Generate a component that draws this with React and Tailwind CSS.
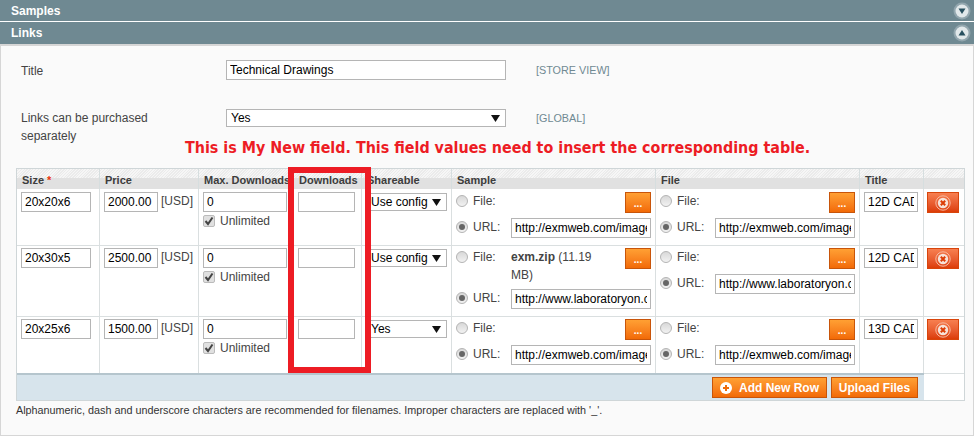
const rows = [
    { size: "20x20x6", price: "2000.00", share: "Use config", sample: "http://exmweb.com/images/sample.zip", file: "http://exmweb.com/images/file.zip", title: "12D CAD Drawing" },
    { size: "20x30x5", price: "2500.00", share: "Use config", sampleFile: true, sample: "http://www.laboratoryon.com/sample.zip", file: "http://www.laboratoryon.com/file.zip", title: "12D CAD Drawing" },
    { size: "20x25x6", price: "1500.00", share: "Yes", sample: "http://exmweb.com/images/sample.zip", file: "http://exmweb.com/images/file.zip", title: "13D CAD Drawing" },
];

const inputCls = "h-5 border border-[#b5b5b5] bg-white px-[3px] text-[12px] text-black outline-none";
const orangeCls = "bg-gradient-to-b from-[#ffa033] to-[#f26a05] border border-[#c8550a]";
const thCls = "h-[20px] border-r border-[#d6dedf] px-[5px] text-left align-top pt-[4px] font-bold text-[11px] leading-[15px] whitespace-nowrap text-[#3d3d3d] bg-[linear-gradient(to_bottom,transparent_9px,#e1e1e1_9px),repeating-linear-gradient(135deg,#f6f6f6_0,#f6f6f6_1px,#ebebeb_1px,#ebebeb_2px)]";
const tdCls = "border-r border-[#dadfe0] p-0 align-top";

const TextBox = ({ value, className }) => (
    <input readOnly value={value} className={`${inputCls} ${className}`} />
);

const Caret = () => (
    <svg width="9" height="7" viewBox="0 0 9 7" className="shrink-0">
        <path d="M0 0h9L4.5 7z" fill="#111" />
    </svg>
);

const Select = ({ value, className }) => (
    <div className={`flex items-center justify-between border border-[#b5b5b5] bg-white text-[12px] text-black ${className}`}>
        <span>{value}</span>
        <Caret />
    </div>
);

const Radio = ({ checked }) => (
    <span className="flex h-3 w-3 shrink-0 items-center justify-center rounded-full border border-[#b4b4b4] bg-gradient-to-b from-[#d8d8d8] to-[#f2f2f2]">
        {checked && <span className="h-[6px] w-[6px] rounded-full bg-[#666]" />}
    </span>
);

const Browse = () => (
    <div className={`flex h-[21px] w-[26px] shrink-0 items-end justify-center pb-[3px] text-[10px] font-bold leading-[10px] text-white ${orangeCls}`}>...</div>
);

const CircleButton = ({ kind }) => (
    <svg width="18" height="18" viewBox="0 0 18 18">
        <circle cx="9" cy="9" r="8.5" fill="#92a6ae" />
        <circle cx="9" cy="9" r="6.5" fill="#e1e8ea" />
        <path d={kind === "down" ? "M5.5 6.5h7L9 12z" : "M5.5 11.5h7L9 6z"} fill="#28505f" />
    </svg>
);

const Section = ({ title, kind, className }) => (
    <div className={`flex items-center justify-between bg-[#6f8992] pl-[11px] pr-[3px] text-[12px] font-bold text-white ${className}`}>
        <span>{title}</span>
        <CircleButton kind={kind} />
    </div>
);

const FileCell = ({ url, showName, first }) => (
    <div className={`flex flex-col pl-[4px] ${first ? "pt-[3px]" : "pt-[2px]"}`}>
        <div className="flex items-start">
            <div className="flex w-[55px] shrink-0 items-center gap-[5px] pt-px leading-[16px]">
                <Radio />
                <span>File:</span>
            </div>
            {showName ? (
                <div className="mr-[22px] h-[36px] w-[92px] leading-[18px]">
                    <span className="font-bold">exm.zip</span> (11.19 MB)
                </div>
            ) : (
                <div className="w-[114px]" />
            )}
            <Browse />
        </div>
        <div className="mt-[5px] flex items-start">
            <div className="flex w-[55px] shrink-0 items-center gap-[5px] pt-px leading-[16px]">
                <Radio checked />
                <span>URL:</span>
            </div>
            <TextBox value={url} className="w-[140px]" />
        </div>
    </div>
);

const App = () => {
    return (
        <div className="h-[436px] w-[974px] overflow-hidden bg-white font-['Liberation_Sans',Arial,sans-serif] text-[12px] text-[#444]">
            <Section title="Samples" kind="down" className="h-[21px]" />
            <Section title="Links" kind="up" className="mt-px h-[22px]" />
            <div className="h-[392px] border-x border-b border-t-2 border-[#d6d6d6] bg-[#fafafa] px-[15px]">
                <div className="flex h-[49px] items-start pt-[14px]">
                    <div className="w-[210px] pl-[5px] pt-[2px]">Title</div>
                    <TextBox value="Technical Drawings" className="w-[280px]" />
                    <div className="ml-[30px] pt-[2px] text-[10.8px] text-[#6f8992]">[STORE VIEW]</div>
                </div>
                <div className="flex h-[73px] items-start pt-[14px]">
                    <div className="w-[210px] pl-[5px] leading-[18px]">Links can be purchased<br />separately</div>
                    <Select value="Yes" className="h-[18px] w-[280px] pl-[4px] pr-[5px]" />
                    <div className="ml-[30px] pt-px text-[10.8px] text-[#6f8992]">[GLOBAL]</div>
                </div>
                <div className="relative">
                    <p className="absolute left-[169px] top-[-32px] whitespace-nowrap font-['DejaVu_Sans_Condensed','DejaVu_Sans',sans-serif] text-[15.9px] font-bold text-[#ed1c24] [font-stretch:condensed]">
                        This is My New field. This field values need to insert the corresponding table.
                    </p>
                    <div className="absolute left-[272px] top-[-1px] h-[206px] w-[83px] border-[6px] border-[#ed1c24]" />
                    <table className="w-[949px] table-fixed border-separate border-spacing-0 border border-[#cfd6d8] bg-white">
                        <colgroup>
                            <col className="w-[83px]" />
                            <col className="w-[99px]" />
                            <col className="w-[95px]" />
                            <col className="w-[68px]" />
                            <col className="w-[90px]" />
                            <col className="w-[204px]" />
                            <col className="w-[204px]" />
                            <col className="w-[64px]" />
                            <col className="w-[40px]" />
                        </colgroup>
                        <thead>
                            <tr>
                                <th className={thCls}>Size <span className="text-[#eb340a]">*</span></th>
                                <th className={thCls}>Price</th>
                                <th className={thCls}>Max. Downloads</th>
                                <th className={thCls}>Downloads</th>
                                <th className={thCls}>Shareable</th>
                                <th className={thCls}>Sample</th>
                                <th className={thCls}>File</th>
                                <th className={thCls}>Title</th>
                                <th className={`${thCls} border-r-0`} />
                            </tr>
                        </thead>
                        <tbody>
                            {rows.map((row, i) => {
                                const first = i === 0;
                                const topLine = first ? "" : "border-t border-t-[#dadfe0]";
                                const pad = first ? "pt-[3px]" : "pt-[2px]";
                                return (
                                    <tr key={row.size} className={first ? "h-[56px]" : i === 1 ? "h-[71px]" : "h-[57px]"}>
                                        <td className={`${tdCls} ${topLine} ${pad} pl-[4px]`}>
                                            <TextBox value={row.size} className="w-[70px]" />
                                        </td>
                                        <td className={`${tdCls} ${topLine} ${pad} pl-[4px]`}>
                                            <div className="flex items-start gap-[3px]">
                                                <TextBox value={row.price} className="w-[54px]" />
                                                <span className="leading-[18px]">[USD]</span>
                                            </div>
                                        </td>
                                        <td className={`${tdCls} ${topLine} ${pad} pl-[4px]`}>
                                            <TextBox value="0" className="w-[84px] text-[#333]" />
                                            <div className="flex items-center gap-[5px]">
                                                <span className="flex h-3 w-3 items-center justify-center rounded-[2px] border border-[#bbb] bg-[#e0e0e0]">
                                                    <svg width="10" height="10" viewBox="0 0 10 10"><path d="M1.5 5l2.5 3L8.5 1.5" fill="none" stroke="#444" strokeWidth="2" /></svg>
                                                </span>
                                                <span>Unlimited</span>
                                            </div>
                                        </td>
                                        <td className={`${tdCls} ${topLine} ${pad} pl-[4px]`}>
                                            <TextBox value="" className="w-[57px]" />
                                        </td>
                                        <td className={`${tdCls} ${topLine} ${first ? "pt-[4px]" : "pt-[3px]"} pl-[8px]`}>
                                            <Select value={row.share} className="h-[18px] w-[77px] pr-[5px]" />
                                        </td>
                                        <td className={`${tdCls} ${topLine}`}>
                                            <FileCell url={row.sample} showName={row.sampleFile} first={first} />
                                        </td>
                                        <td className={`${tdCls} ${topLine}`}>
                                            <FileCell url={row.file} first={first} />
                                        </td>
                                        <td className={`${tdCls} ${topLine} ${pad} pl-[4px]`}>
                                            <TextBox value={row.title} className="w-[54px]" />
                                        </td>
                                        <td className={`${tdCls} ${topLine} ${pad} border-r-0 pl-[3px]`}>
                                            <div className="flex h-[21px] w-[32px] items-center justify-center border border-[#d8450c] bg-gradient-to-b from-[#f77f50] to-[#dc3c05]">
                                                <svg width="16" height="16" viewBox="0 0 16 16">
                                                    <circle cx="8" cy="8" r="7.2" fill="none" stroke="#f6b9a0" strokeWidth="1" />
                                                    <circle cx="8" cy="8" r="5.2" fill="#f7e2d8" />
                                                    <path d="M5.8 5.8l4.4 4.4M10.2 5.8l-4.4 4.4" stroke="#dc3c05" strokeWidth="2" />
                                                </svg>
                                            </div>
                                        </td>
                                    </tr>
                                );
                            })}
                        </tbody>
                        <tfoot>
                            <tr className="h-[27px]">
                                <td colSpan={8} className="border-t-2 border-[#b5c5cd] bg-[#d7e4ec] p-0">
                                    <div className="flex items-center justify-end gap-[4px] pr-[6px]">
                                        <div className={`flex h-[21px] w-[115px] items-center gap-[7px] pl-[7px] text-[12px] font-bold text-white ${orangeCls}`}>
                                            <svg width="12" height="12" viewBox="0 0 12 12"><circle cx="6" cy="6" r="6" fill="#fff" /><path d="M6 3v6M3 6h6" stroke="#ef6d0c" strokeWidth="2" /></svg>
                                            <span>Add New Row</span>
                                        </div>
                                        <div className={`flex h-[21px] w-[87px] items-center justify-center text-[12px] font-bold text-white ${orangeCls}`}>Upload Files</div>
                                    </div>
                                </td>
                                <td className="border-t border-[#dadfe0] p-0" />
                            </tr>
                        </tfoot>
                    </table>
                    <div className="mt-px text-[10.8px] leading-[16px] text-[#333]">
                        Alphanumeric, dash and underscore characters are recommended for filenames. Improper characters are replaced with '_'.
                    </div>
                </div>
            </div>
        </div>
    );
};

export default App;
